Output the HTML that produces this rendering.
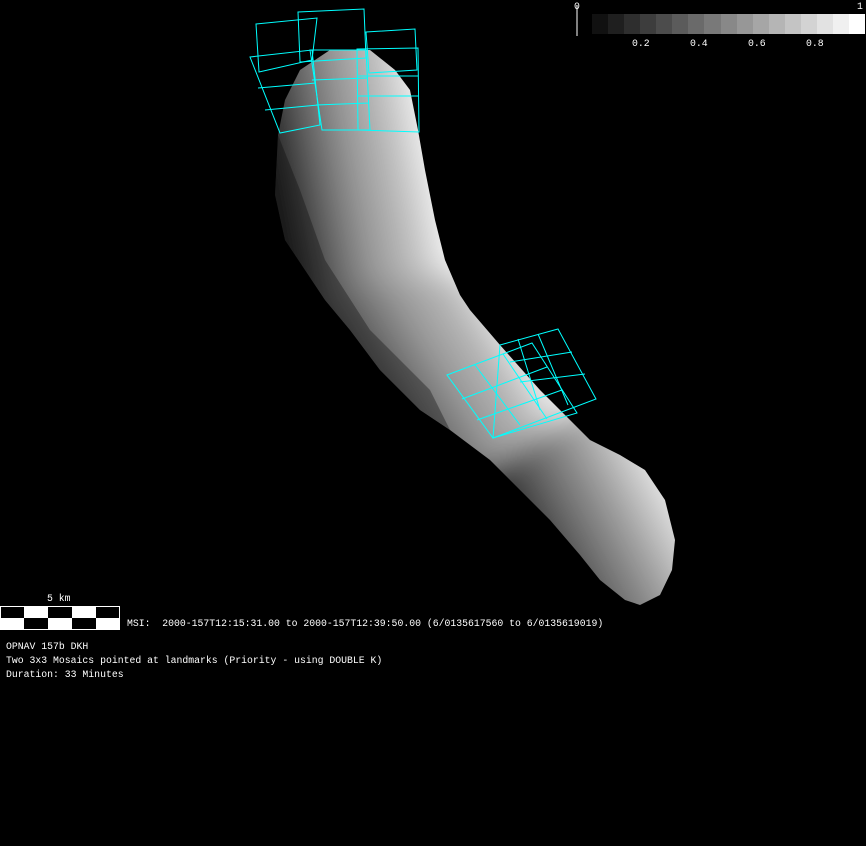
<!DOCTYPE html>
<html><head><meta charset="utf-8"><style>
html,body{margin:0;padding:0;background:#000;width:866px;height:846px;overflow:hidden}
.t{position:absolute;color:#fff;font-family:"Liberation Mono",monospace;font-size:9.8px;line-height:12px;white-space:pre}
</style></head><body>
<svg width="866" height="846" style="position:absolute;left:0;top:0">
<defs>
<clipPath id="cb"><path d="M278,135 L275,195 L285,240 L305,270 L325,300 L350,330 L380,370 L420,410 L450,430 L490,460 L520,490 L550,520 L580,555 L600,580 L625,600 L640,605 L660,595 L672,570 L675,540 L665,500 L645,470 L620,455 L590,440 L565,415 L540,390 L500,345 L470,310 L460,295 L445,260 L435,220 L425,170 L418,130 L410,90 L395,70 L370,50 L330,50 L300,70 L285,100 Z"/></clipPath>
<filter id="bl" x="-20%" y="-20%" width="140%" height="140%"><feGaussianBlur stdDeviation="14"/></filter>
<linearGradient id="ga" x1="280" y1="200" x2="440" y2="170" gradientUnits="userSpaceOnUse">
<stop offset="0" stop-color="#1a1a1a"/><stop offset="0.2" stop-color="#555"/><stop offset="0.45" stop-color="#929292"/><stop offset="0.75" stop-color="#c0c0c0"/><stop offset="1" stop-color="#fafafa"/></linearGradient>
<linearGradient id="gb" x1="330" y1="400" x2="490" y2="300" gradientUnits="userSpaceOnUse">
<stop offset="0" stop-color="#111"/><stop offset="0.3" stop-color="#555"/><stop offset="0.6" stop-color="#999"/><stop offset="0.85" stop-color="#bbb"/><stop offset="1" stop-color="#eee"/></linearGradient>
<linearGradient id="gc" x1="530" y1="560" x2="680" y2="480" gradientUnits="userSpaceOnUse">
<stop offset="0" stop-color="#222"/><stop offset="0.3" stop-color="#666"/><stop offset="0.6" stop-color="#a0a0a0"/><stop offset="0.85" stop-color="#d8d8d8"/><stop offset="1" stop-color="#f5f5f5"/></linearGradient>
</defs>
<g clip-path="url(#cb)">
<g filter="url(#bl)">
<polygon fill="url(#ga)" points="150,-50 550,-50 550,270 150,330"/>
<polygon fill="url(#gb)" points="150,315 550,260 640,400 460,510 150,510"/>
<polygon fill="url(#gc)" points="455,495 598,395 750,380 750,700 400,700"/>
</g>
<path fill="#0a0a0a" opacity="0.35" d="M278,135 L275,195 L285,240 L305,270 L325,300 L350,330 L380,370 L420,410 L450,430 L430,390 L370,330 L325,260 L300,190 Z"/>
</g>
<g fill="none" stroke="#0ff" stroke-width="1">
<path d="M256,24 L317,18 L312,60 L259,72 Z"/>
<path d="M298,12 L364,9 L366,58 L300,62 Z"/>
<path d="M366,32 L415,29 L417,70 L369,73 Z"/>
<path d="M250,57 L312,50 L320,125 L280,133 Z M258,88 L316,83 M265,110 L318,105"/>
<path d="M310,50 L366,50 L370,130 L322,130 Z M312,80 L368,78 M316,105 L369,103"/>
<path d="M357,49 L418,48 L419,132 L358,130 Z M358,76 L418,76 M358,96 L419,96"/>
<path d="M447,375 L532,343 L577,413 L493,438 Z M462,399 L547,367 M477,420 L562,390 M475,365 L520,425 M503,354 L547,419"/>
<path d="M500,345 L558,329 L596,399 L493,438 Z M510,362 L572,352 M520,382 L585,374 M518,339 L540,410 M538,334 L568,405"/>
</g>
<line x1="577" y1="6" x2="577" y2="36" stroke="#fff"/>
<rect x="0" y="606" width="120" height="24" fill="#fff"/>
<g fill="#000"><rect x="1" y="607" width="23" height="11"/><rect x="48" y="607" width="24" height="11"/><rect x="96" y="607" width="23" height="11"/><rect x="24" y="618" width="24" height="11"/><rect x="72" y="618" width="24" height="11"/></g>
</svg>
<div style="position:absolute;left:592px;top:14px;height:20px;width:273px;display:flex">
<div style="flex:1;background:#111"></div><div style="flex:1;background:#1f1f1f"></div><div style="flex:1;background:#2e2e2e"></div><div style="flex:1;background:#3d3d3d"></div><div style="flex:1;background:#4c4c4c"></div><div style="flex:1;background:#5b5b5b"></div><div style="flex:1;background:#6a6a6a"></div><div style="flex:1;background:#797979"></div><div style="flex:1;background:#888"></div><div style="flex:1;background:#979797"></div><div style="flex:1;background:#a6a6a6"></div><div style="flex:1;background:#b5b5b5"></div><div style="flex:1;background:#c4c4c4"></div><div style="flex:1;background:#d3d3d3"></div><div style="flex:1;background:#e2e2e2"></div><div style="flex:1;background:#f0f0f0"></div><div style="flex:1;background:#fff"></div></div>
<div class="t" style="left:574px;top:1px">0</div>
<div class="t" style="left:857px;top:1px">1</div>
<div class="t" style="left:632px;top:38px">0.2</div>
<div class="t" style="left:690px;top:38px">0.4</div>
<div class="t" style="left:748px;top:38px">0.6</div>
<div class="t" style="left:806px;top:38px">0.8</div>
<div class="t" style="left:47px;top:593px">5 km</div>
<div class="t" style="left:127px;top:618px">MSI:  2000-157T12:15:31.00 to 2000-157T12:39:50.00 (6/0135617560 to 6/0135619019)</div>
<div class="t" style="left:6px;top:641px">OPNAV 157b DKH</div>
<div class="t" style="left:6px;top:655px">Two 3x3 Mosaics pointed at landmarks (Priority - using DOUBLE K)</div>
<div class="t" style="left:6px;top:669px">Duration: 33 Minutes</div>
</body></html>
